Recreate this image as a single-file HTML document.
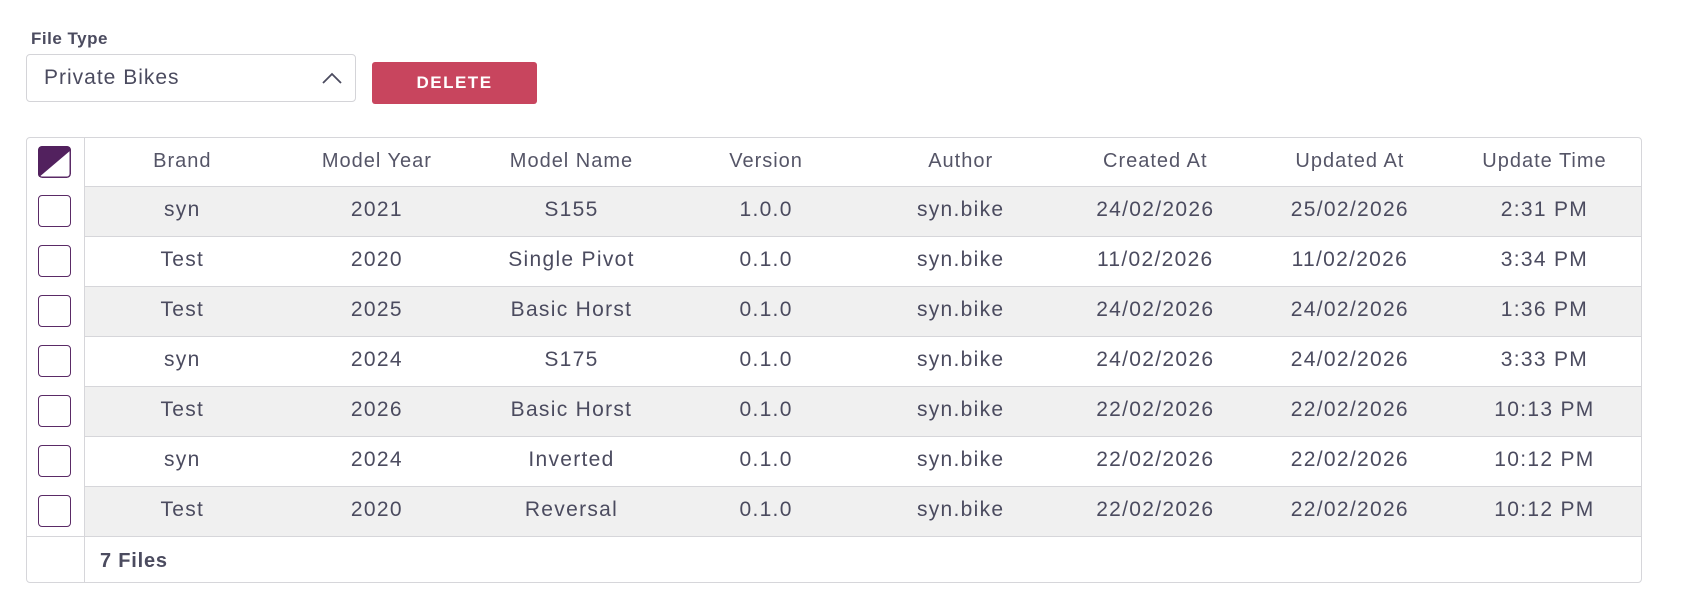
<!DOCTYPE html>
<html><head><style>
body{margin:0;width:1694px;height:614px;background:#fff;font-family:"Liberation Sans",sans-serif;color:#4b4b5f;position:relative;overflow:hidden}
.lbl{position:absolute;left:31px;top:29px;font-size:17px;font-weight:bold;color:#4b4b5f;letter-spacing:0.5px}
.sel{position:absolute;left:26px;top:54px;width:330px;height:48px;border:1px solid #d4d4d8;border-radius:4px;box-sizing:border-box;font-size:21px;padding:11px 0 0 17px;letter-spacing:1px}
.sel svg{position:absolute;right:12px;top:16px}
.del{position:absolute;left:372px;top:62px;width:165px;height:42px;background:#c8455e;border-radius:3px;color:#fff;font-weight:bold;font-size:17px;letter-spacing:1.5px;text-align:center;line-height:42px}
.tbl{position:absolute;left:26px;top:137px;width:1616px;height:446px;border:1px solid #d6d6da;border-radius:4px;box-sizing:border-box;overflow:hidden}
.cb{position:absolute;left:0;top:0;width:58px;height:100%;border-right:1px solid #d6d6da;box-sizing:border-box}
.row{position:absolute;left:58px;right:0;height:50px;border-bottom:1px solid #d6d6da;box-sizing:border-box;display:flex;font-size:21px;line-height:45px;letter-spacing:1.3px}
.row div{width:194.6px;text-align:center;flex:none}
.g{background:#f0f0f0}
.h{color:#555567;font-size:20px;letter-spacing:1px;line-height:47px;height:49px}
.box{position:absolute;left:11px;width:33px;height:32px;border:1.5px solid #5a2a66;border-radius:4px;box-sizing:border-box;background:#fff}
.foot{position:absolute;left:100px;top:550px;font-size:20px;font-weight:bold;color:#4b4b5f;letter-spacing:0.8px}
</style></head><body>
<div class="lbl">File Type</div>
<div class="sel">Private Bikes<svg width="22" height="14" viewBox="0 0 22 14"><path d="M2 12 L11 3 L20 12" fill="none" stroke="#4b4b5f" stroke-width="1.8"/></svg></div>
<div class="del">DELETE</div>
<div class="tbl">
<div class="cb"></div>
<div class="row h" style="top:0"><div>Brand</div><div>Model Year</div><div>Model Name</div><div>Version</div><div>Author</div><div>Created At</div><div>Updated At</div><div>Update Time</div></div>
<div class="row g" style="top:49px"><div>syn</div><div>2021</div><div>S155</div><div>1.0.0</div><div>syn.bike</div><div>24/02/2026</div><div>25/02/2026</div><div>2:31 PM</div></div>
<div class="row" style="top:99px"><div>Test</div><div>2020</div><div>Single Pivot</div><div>0.1.0</div><div>syn.bike</div><div>11/02/2026</div><div>11/02/2026</div><div>3:34 PM</div></div>
<div class="row g" style="top:149px"><div>Test</div><div>2025</div><div>Basic Horst</div><div>0.1.0</div><div>syn.bike</div><div>24/02/2026</div><div>24/02/2026</div><div>1:36 PM</div></div>
<div class="row" style="top:199px"><div>syn</div><div>2024</div><div>S175</div><div>0.1.0</div><div>syn.bike</div><div>24/02/2026</div><div>24/02/2026</div><div>3:33 PM</div></div>
<div class="row g" style="top:249px"><div>Test</div><div>2026</div><div>Basic Horst</div><div>0.1.0</div><div>syn.bike</div><div>22/02/2026</div><div>22/02/2026</div><div>10:13 PM</div></div>
<div class="row" style="top:299px"><div>syn</div><div>2024</div><div>Inverted</div><div>0.1.0</div><div>syn.bike</div><div>22/02/2026</div><div>22/02/2026</div><div>10:12 PM</div></div>
<div class="row g" style="top:349px"><div>Test</div><div>2020</div><div>Reversal</div><div>0.1.0</div><div>syn.bike</div><div>22/02/2026</div><div>22/02/2026</div><div>10:12 PM</div></div>
<div style="position:absolute;left:0;width:58px;top:398px;height:1px;background:#d6d6da"></div>
<svg class="box" style="top:8px;border:none" viewBox="0 0 33 32"><rect x="0.75" y="0.75" width="31.5" height="30.5" rx="3.5" fill="#fff" stroke="#5a2a66" stroke-width="1.5"/><path d="M4 0 H29 Q33 0 33 4 L0 32 V4 Q0 0 4 0Z" fill="#52215e"/></svg>
<div class="box" style="top:57px"></div>
<div class="box" style="top:107px"></div>
<div class="box" style="top:157px"></div>
<div class="box" style="top:207px"></div>
<div class="box" style="top:257px"></div>
<div class="box" style="top:307px"></div>
<div class="box" style="top:357px"></div>
</div>
<div class="foot">7 Files</div>
</body></html>
